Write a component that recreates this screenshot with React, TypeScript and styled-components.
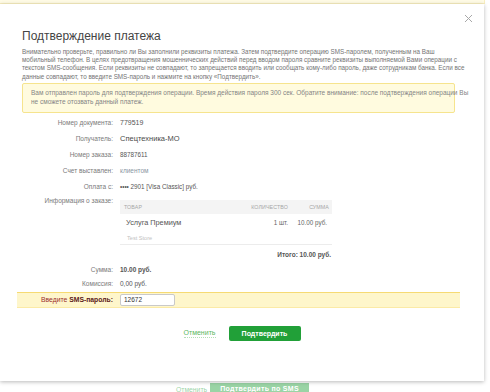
import React from "react";
import styled, { createGlobalStyle } from "styled-components";

const Global = createGlobalStyle`
  html, body { margin: 0; padding: 0; background: #fff; }
  body { font-family: "Liberation Sans", Arial, sans-serif; }
  #root { width: 490px; height: 392px; overflow: hidden; }
  * { box-sizing: border-box; }
`;

const Page = styled.div`
  position: relative;
  width: 490px;
  height: 392px;
  overflow: hidden;
  display: flex;
  flex-direction: column;
  justify-content: space-between;
`;

const PageNotice = styled.div`
  width: 485px;
  height: 4px;
  background: #fff6c6;
  border-right: 1px solid #f2dc72;
  border-bottom: 1px solid #f2dc72;
`;

const PageFooter = styled.div`
  height: 9px;
  display: flex;
  align-items: flex-start;
  gap: 3px;
  padding-left: 176px;
  overflow: hidden;
`;

const PageLink = styled.span`
  font-size: 6.8px;
  line-height: 9px;
  color: #21a038;
  margin-top: 2px;
`;

const PageButton = styled.span`
  width: 99px;
  height: 20px;
  background: #21a038;
  color: #fff;
  font-size: 7px;
  font-weight: bold;
  text-align: center;
  line-height: 12px;
  letter-spacing: 0.3px;
`;

const Overlay = styled.div`
  position: absolute;
  inset: 0;
  background: rgba(255, 255, 255, 0.55);
`;

const Modal = styled.div`
  position: absolute;
  left: 0;
  top: 4px;
  width: 484px;
  height: 377px;
  background: #fff;
  box-shadow: 0 1px 4px rgba(0, 0, 0, 0.28);
  padding: 25px 22px 0 22px;
  display: flex;
  flex-direction: column;
`;

const Close = styled.button`
  position: absolute;
  top: 9px;
  right: 11px;
  width: 10px;
  height: 10px;
  padding: 0;
  border: 0;
  background: transparent;
  display: flex;
  align-items: center;
  justify-content: center;
`;

const Title = styled.h1`
  margin: 0;
  font-size: 12px;
  line-height: 14px;
  font-weight: normal;
  color: #444;
`;

const Intro = styled.p`
  margin: 5px 0 0 0;
  font-size: 6.3px;
  line-height: 8.2px;
  color: #747474;
  white-space: nowrap;
`;

const Notice = styled.div`
  margin-top: 2px;
  width: 433px;
  padding: 4px 8px 6px 8px;
  background: #fffbdf;
  border: 1px solid #f6e48e;
  border-radius: 2px;
  font-size: 6.5px;
  line-height: 9px;
  color: #858585;
  white-space: nowrap;
`;

const Details = styled.div`
  margin-top: 2px;
  display: flex;
  flex-direction: column;
`;

const Row = styled.div<{ $h?: number; $top?: boolean }>`
  display: grid;
  grid-template-columns: 91px 1fr;
  column-gap: 7px;
  align-items: ${(p) => (p.$top ? "start" : "center")};
  min-height: ${(p) => p.$h ?? 16}px;
`;

const Label = styled.div<{ $mt?: number }>`
  text-align: right;
  font-size: 6.5px;
  line-height: 8px;
  color: #7a7a7a;
  margin-top: ${(p) => p.$mt ?? 0}px;
  white-space: nowrap;
`;

const Value = styled.div<{ $size?: number; $bold?: boolean; $color?: string }>`
  font-size: ${(p) => p.$size ?? 6.5}px;
  line-height: 9px;
  font-weight: ${(p) => (p.$bold ? "bold" : "normal")};
  color: ${(p) => p.$color ?? "#555"};
  white-space: nowrap;
`;

const OrderBox = styled.div`
  margin-top: 5px;
  width: 212px;
  padding-bottom: 4px;
`;

const TableRow = styled.div<{ $h: number; $bg?: string; $line?: boolean }>`
  display: grid;
  grid-template-columns: 1fr 46px 40px;
  align-items: center;
  height: ${(p) => p.$h}px;
  background: ${(p) => p.$bg ?? "transparent"};
  border-bottom: ${(p) => (p.$line ? "1px solid #ececec" : "0")};
`;

const Cell = styled.div<{
  $size: number;
  $color: string;
  $align?: "left" | "right";
  $pl?: number;
  $pr?: number;
}>`
  font-size: ${(p) => p.$size}px;
  color: ${(p) => p.$color};
  text-align: ${(p) => p.$align ?? "left"};
  padding-left: ${(p) => p.$pl ?? 0}px;
  padding-right: ${(p) => p.$pr ?? 0}px;
  white-space: nowrap;
`;

const HeadCell = styled(Cell)`
  text-transform: uppercase;
  letter-spacing: 0.1px;
`;

const Total = styled.div`
  margin-top: 6px;
  text-align: right;
  padding-right: 1px;
  font-size: 6.5px;
  line-height: 8px;
  font-weight: bold;
  color: #555;
`;

const SmsBand = styled.div`
  margin: 1px 0 0 -5px;
  width: 443px;
  height: 16px;
  padding-left: 5px;
  background: #fef6cb;
  border-top: 1px solid #f6da73;
  border-bottom: 1px solid #fbeaa6;
  display: grid;
  grid-template-columns: 91px 1fr;
  column-gap: 7px;
  align-items: center;
`;

const SmsLabel = styled.label`
  text-align: right;
  font-size: 6.8px;
  color: #9a2c2c;
  white-space: nowrap;
  b {
    color: #5a1818;
  }
`;

const SmsInput = styled.input`
  width: 55px;
  height: 12px;
  border: 1px solid #c9c9c9;
  border-radius: 2px;
  padding: 0 3px;
  font-family: "Liberation Sans", Arial, sans-serif;
  font-size: 6.5px;
  color: #333;
  background: #fff;
  outline: none;
`;

const Actions = styled.div`
  margin-top: 18px;
  display: flex;
  align-items: center;
  justify-content: center;
  gap: 13px;
`;

const CancelLink = styled.a`
  font-size: 7px;
  color: #5cb862;
  text-decoration: none;
  border-bottom: 1px dotted #b4dfb6;
  line-height: 8px;
`;

const ConfirmButton = styled.button`
  width: 72px;
  height: 15px;
  padding: 0;
  border: 0;
  border-radius: 2px;
  background: #21a038;
  color: #fff;
  font-family: "Liberation Sans", Arial, sans-serif;
  font-size: 7px;
  font-weight: bold;
`;

export default function App() {
  return (
    <>
      <Global />
      <Page>
        <PageNotice />
        <PageFooter>
          <PageLink>Отменить</PageLink>
          <PageButton>Подтвердить по SMS</PageButton>
        </PageFooter>
        <Overlay />
        <Modal>
          <Close aria-label="Закрыть">
            <svg width="9" height="9" viewBox="0 0 9 9">
              <path d="M1 1 L8 8 M8 1 L1 8" stroke="#a8a8a8" strokeWidth="1" />
            </svg>
          </Close>
          <Title>Подтверждение платежа</Title>
          <Intro>
            Внимательно проверьте, правильно ли Вы заполнили реквизиты платежа. Затем подтвердите операцию SMS-паролем, полученным на Ваш
            <br />
            мобильный телефон. В целях предотвращения мошеннических действий перед вводом пароля сравните реквизиты выполняемой Вами операции с
            <br />
            текстом SMS-сообщения. Если реквизиты не совпадают, то запрещается вводить или сообщать кому-либо пароль, даже сотрудникам банка. Если все
            <br />
            данные совпадают, то введите SMS-пароль и нажмите на кнопку «Подтвердить».
          </Intro>
          <Notice>
            Вам отправлен пароль для подтверждения операции. Время действия пароля 300 сек. Обратите внимание: после подтверждения операции Вы
            <br />
            не сможете отозвать данный платеж.
          </Notice>
          <Details>
            <Row>
              <Label>Номер документа:</Label>
              <Value $size={7}>779519</Value>
            </Row>
            <Row>
              <Label>Получатель:</Label>
              <Value $size={7.5} $color="#4a4a4a">Спецтехника-МО</Value>
            </Row>
            <Row>
              <Label>Номер заказа:</Label>
              <Value $size={6.3}>88787611</Value>
            </Row>
            <Row>
              <Label>Счет выставлен:</Label>
              <Value $color="#8a96a3">клиентом</Value>
            </Row>
            <Row>
              <Label>Оплата с:</Label>
              <Value $size={6.3}>•••• 2901 [Visa Classic] руб.</Value>
            </Row>
            <Row $top>
              <Label $mt={2}>Информация о заказе:</Label>
              <OrderBox>
                <TableRow $h={14} $bg="#f4f4f4">
                  <HeadCell $size={5.3} $color="#a6a6a6" $pl={4}>Товар</HeadCell>
                  <HeadCell $size={5.3} $color="#a6a6a6" $align="right" $pr={4}>Количество</HeadCell>
                  <HeadCell $size={5.3} $color="#a6a6a6" $align="right" $pr={3}>Сумма</HeadCell>
                </TableRow>
                <TableRow $h={18}>
                  <Cell $size={7.3} $color="#555" $pl={6}>Услуга Премиум</Cell>
                  <Cell $size={6.3} $color="#666" $align="right" $pr={4}>1 шт.</Cell>
                  <Cell $size={6.3} $color="#666" $align="right" $pr={5}>10.00 руб.</Cell>
                </TableRow>
                <TableRow $h={13} $line>
                  <Cell $size={5.6} $color="#c2c2c2" $pl={7}>Test Store</Cell>
                  <Cell $size={5.6} $color="#c2c2c2"></Cell>
                  <Cell $size={5.6} $color="#c2c2c2"></Cell>
                </TableRow>
                <Total>Итого: 10.00 руб.</Total>
              </OrderBox>
            </Row>
            <Row $h={14}>
              <Label>Сумма:</Label>
              <Value $bold>10.00 руб.</Value>
            </Row>
            <Row $h={14}>
              <Label>Комиссия:</Label>
              <Value>0,00 руб.</Value>
            </Row>
          </Details>
          <SmsBand>
            <SmsLabel htmlFor="sms">
              Введите <b>SMS-пароль:</b>
            </SmsLabel>
            <SmsInput id="sms" value="12672" readOnly />
          </SmsBand>
          <Actions>
            <CancelLink href="#">Отменить</CancelLink>
            <ConfirmButton>Подтвердить</ConfirmButton>
          </Actions>
        </Modal>
      </Page>
    </>
  );
}
